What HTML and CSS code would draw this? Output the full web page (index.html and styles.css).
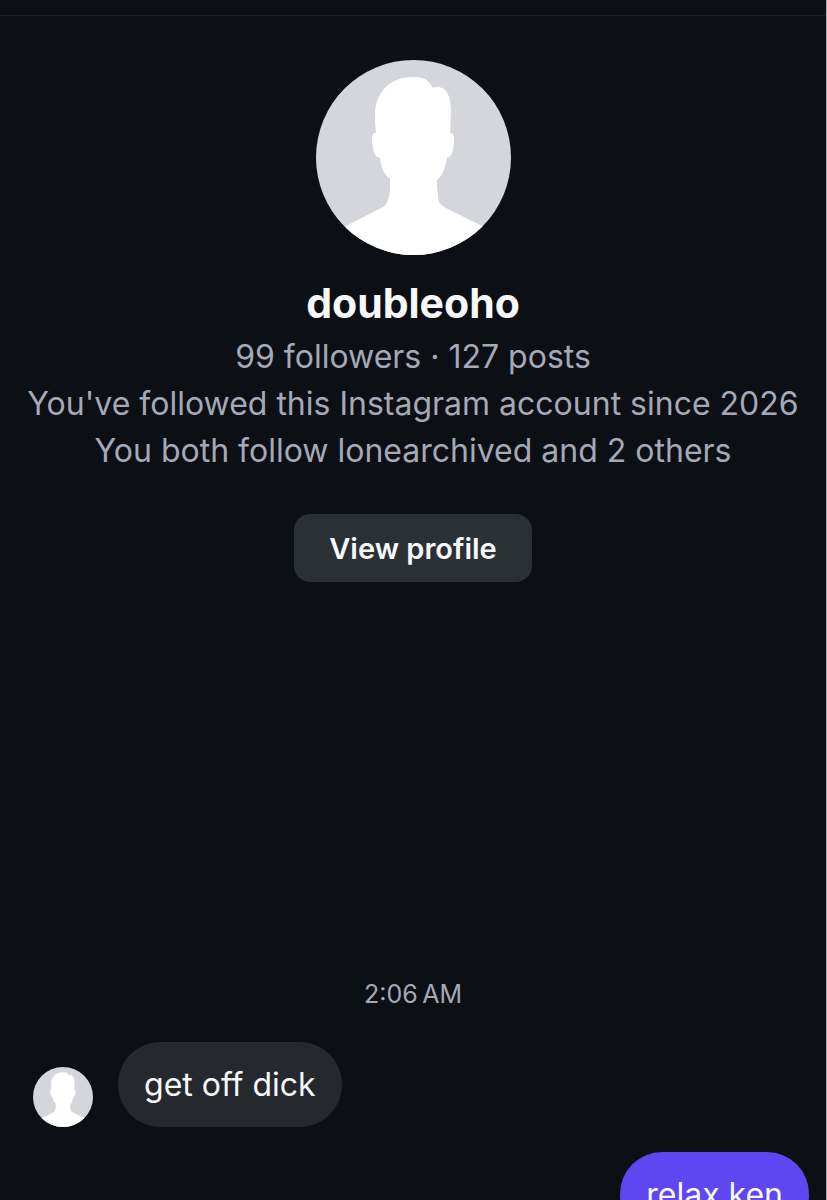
FILE: index.html
```
<!DOCTYPE html>
<html lang="en">
<head>
    <meta charset="UTF-8">
    <meta name="viewport" content="width=device-width, initial-scale=1.0">
    <title>doubleoho</title>
    <link rel="stylesheet" href="styles.css">
</head>
<body>

    <!-- Silhouette shared by both avatars -->
    <svg class="hidden" aria-hidden="true">
        <symbol id="silhouette" viewBox="0 0 195 195">
            <rect width="195" height="195" fill="#d5d6dc"/>
            <path fill="#fff" d="M98 17C82 17 71 23 65 33C58 43 59 54 59 63L60 73C56 73 56 76 56 81C57 90 58 97 64 98C65 108 68 114 74 119C74 129 74 135 72 140C71 144 69 146 65 148L30 166L18 195H178L166 166L130 148C124 145 122 142 122 136C121 130 121 125 121 120C127 115 129 108 131 98C136 97 138 90 138 79C138 75 137 73 134 73L135 52C135 37 131 27 121 27C119 27 117 28 116 27C112 19 107 17 98 17Z"/>
        </symbol>
    </svg>

    <main class="chat">
        <header class="chat-header"></header>

        <section class="profile">
            <svg class="avatar avatar-large" role="img" aria-label="doubleoho"><use href="#silhouette"/></svg>
            <h1>doubleoho</h1>
            <p>99 followers · 127 posts</p>
            <p>You've followed this Instagram account since 2026</p>
            <p>You both follow lonearchived and 2 others</p>
            <button type="button" class="profile-button">View profile</button>
        </section>

        <section class="messages">
            <time class="timestamp">2:06&#8239;AM</time>
            <div class="message received">
                <svg class="avatar avatar-small" role="img" aria-label="doubleoho"><use href="#silhouette"/></svg>
                <div class="bubble">get off dick</div>
            </div>
            <div class="message sent">
                <div class="bubble">relax ken</div>
            </div>
        </section>
    </main>

</body>
</html>
```
FILE: styles.css
```
* {
    box-sizing: border-box;
}
body {
    margin: 0;
    background-color: #0c0f14;
    color: #f7f8fa;
    font-family: Inter, "Liberation Sans", sans-serif;
    overflow: hidden;
}
.hidden {
    display: none;
}
.chat {
    height: 100vh;
    overflow: hidden;
    border-right: 1px solid #a9abb0;
}
.chat-header {
    height: 16px;
    border-bottom: 1px solid #1c2025;
}
.avatar {
    display: block;
    border-radius: 50%;
    flex-shrink: 0;
}
.avatar-large {
    width: 195px;
    height: 195px;
}
.avatar-small {
    width: 60px;
    height: 60px;
}

/* Account summary */
.profile {
    display: flex;
    flex-direction: column;
    align-items: center;
    padding-top: 44px;
    text-align: center;
}
h1 {
    margin: 22px 0 4px;
    font-size: 41px;
    line-height: 52px;
    font-weight: 700;
}
p {
    margin: 0;
    color: #a5a9b7;
    font-size: 32px;
    line-height: 47px;
}
.profile-button {
    height: 68px;
    margin-top: 40px;
    padding: 0 35px;
    border: none;
    border-radius: 16px;
    background-color: #2b3035;
    color: #f7f8fa;
    font-family: inherit;
    font-size: 29px;
    font-weight: 600;
    cursor: pointer;
}

/* Conversation */
.messages {
    display: flex;
    flex-direction: column;
    padding-top: 396px;
}
.timestamp {
    align-self: center;
    margin-bottom: 32px;
    color: #a5a9b7;
    font-size: 25px;
    line-height: 32px;
}
.message {
    display: flex;
    align-items: flex-end;
    gap: 25px;
    margin-bottom: 25px;
    padding: 0 17px 0 33px;
}
.sent {
    justify-content: flex-end;
}
.bubble {
    padding: 18px 26px;
    border-radius: 42px;
    background-color: #25282d;
    font-size: 32px;
    line-height: 49px;
}
.sent .bubble {
    background-color: #5f46f0;
}
```
